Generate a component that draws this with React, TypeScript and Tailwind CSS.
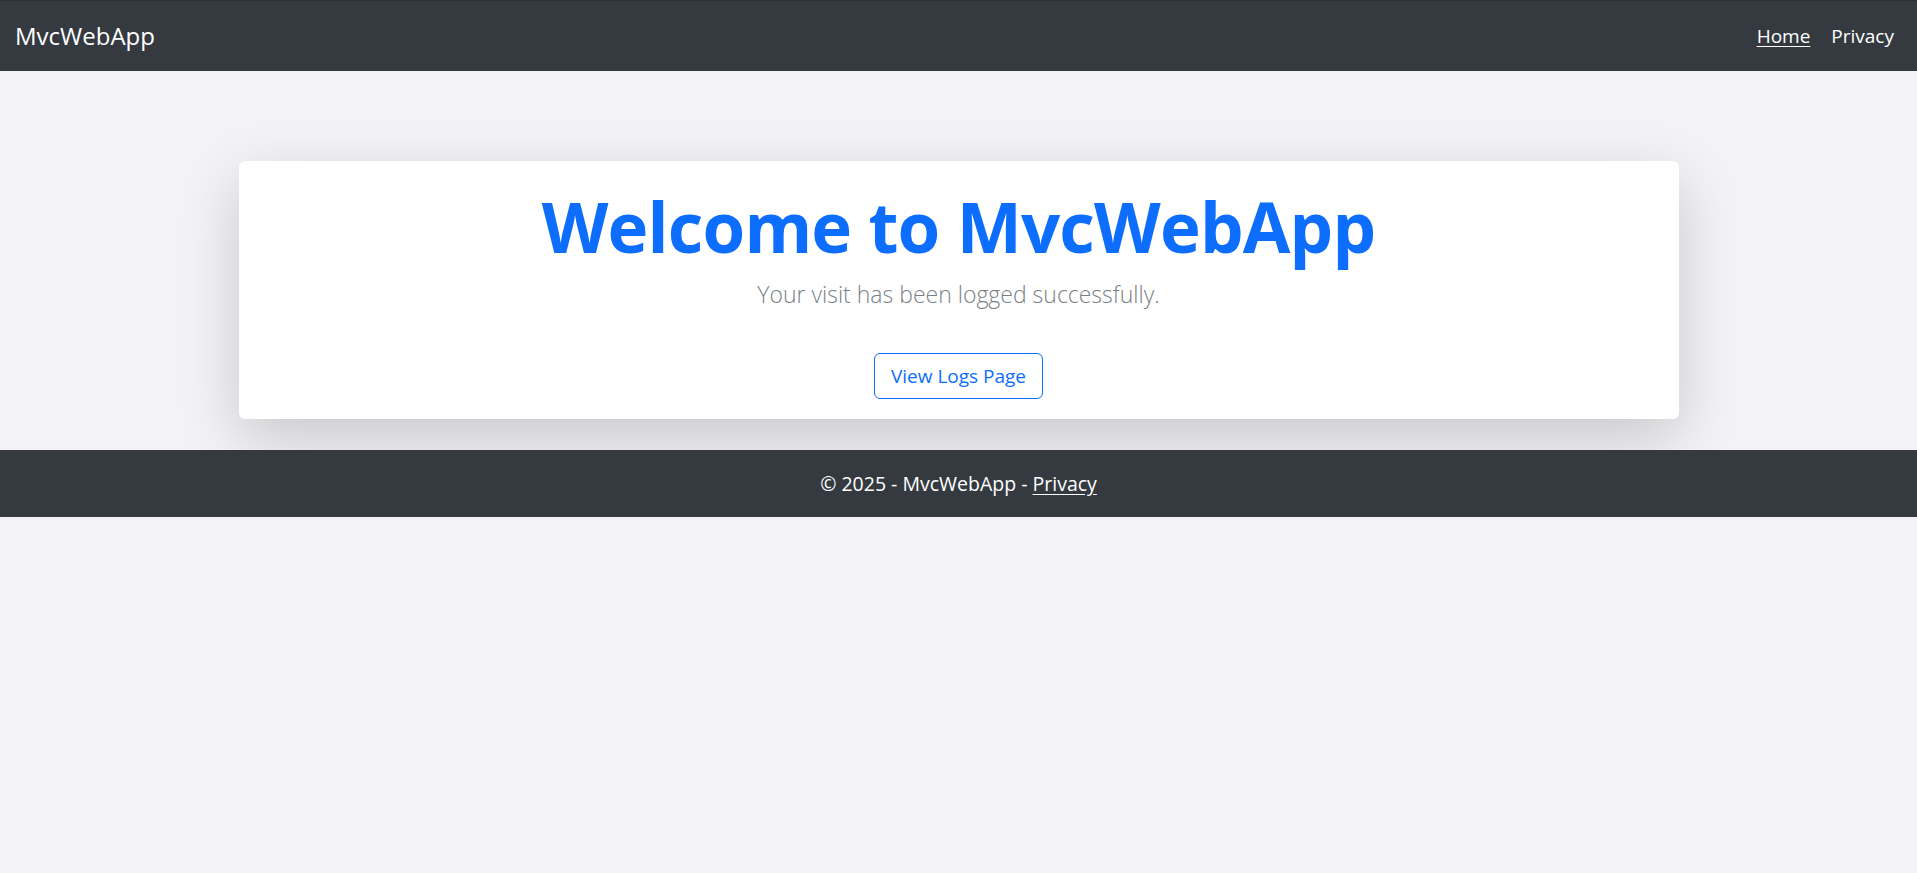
export default function App() {
  return (
    <div className="min-h-screen bg-[#f3f3f7] font-['Open_Sans',sans-serif]">
      <nav className="flex h-[71px] items-center justify-between border-t border-[#2a2e33] bg-[#343a40] px-[15px]">
        <a href="#" className="text-[24px] leading-none text-white">
          MvcWebApp
        </a>
        <div className="flex items-center gap-[21px] pr-[8px] text-[19px] text-white">
          <a href="#" className="underline underline-offset-[3px]">Home</a>
          <a href="#">Privacy</a>
        </div>
      </nav>

      <main className="pt-[90px] pb-[31px]">
        <div className="mx-auto flex w-[1440px] flex-col items-center rounded-[6px] bg-white pt-[24px] pb-[20px] shadow-[0_20px_60px_rgba(0,0,0,0.175)]">
          <h1 className="text-[69px] font-bold leading-[1.2] tracking-[-0.8px] text-[#0d6efd]">
            Welcome to MvcWebApp
          </h1>
          <p className="mt-[9px] text-[23px] font-light text-[#7a7f86]">
            Your visit has been logged successfully.
          </p>
          <a
            href="#"
            className="mt-[42px] flex h-[46px] w-[169px] items-center justify-center rounded-[6px] border border-[#0d6efd] text-[19px] text-[#0d6efd]"
          >
            View Logs Page
          </a>
        </div>
      </main>

      <footer className="flex h-[67px] items-center justify-center bg-[#343a40] text-[19.5px] text-white">
        <span>
          © 2025 - MvcWebApp - <a href="#" className="underline underline-offset-[3px]">Privacy</a>
        </span>
      </footer>
    </div>
  );
}
